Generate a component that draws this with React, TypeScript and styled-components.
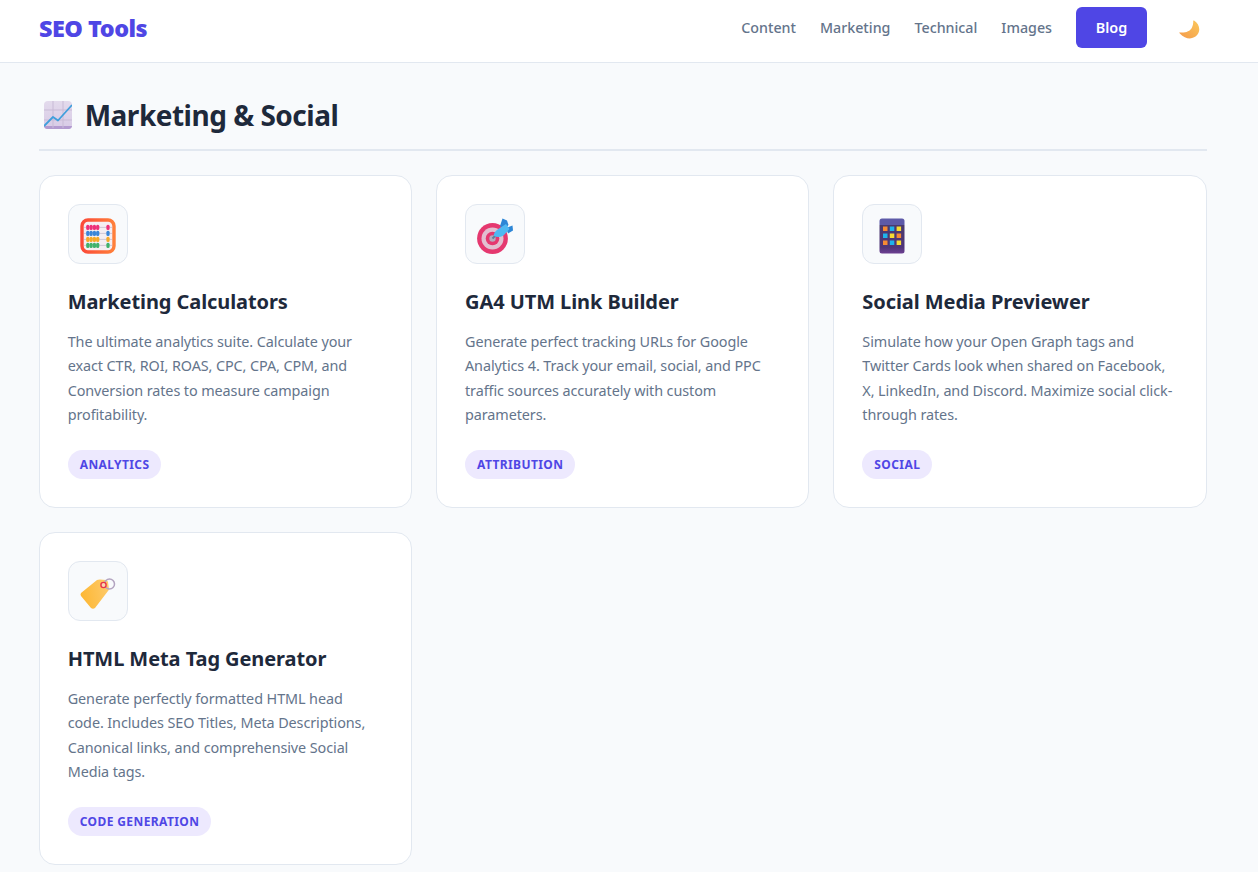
import React from "react";
import styled, { createGlobalStyle } from "styled-components";

const Global = createGlobalStyle`
  html, body { margin: 0; padding: 0; background: #f8fafc; }
  body { font-family: "Noto Sans", Inter, sans-serif; color: #1e293b; }
  * { box-sizing: border-box; }
`;

const Header = styled.header`
  height: 63px;
  background: #ffffff;
  border-bottom: 1px solid #e2e8f0;
  display: flex;
  align-items: center;
  justify-content: space-between;
  padding: 0 57px 7px 39px;
`;
const Logo = styled.a`
  font-size: 23.4px;
  font-weight: 900;
  letter-spacing: -0.5px;
  color: #4f46e5;
  line-height: 30px;
`;
const Nav = styled.nav`
  display: flex;
  align-items: center;
`;
const NavLink = styled.a`
  font-size: 14.25px;
  font-weight: 500;
  color: #64748b;
  margin-right: 24px;
`;
const BlogButton = styled.a`
  width: 71px;
  height: 41px;
  display: flex;
  align-items: center;
  justify-content: center;
  background: #4f46e5;
  color: #ffffff;
  border-radius: 6px;
  font-size: 14.4px;
  font-weight: 600;
`;
const ThemeToggle = styled.button`
  width: 21px;
  height: 20px;
  margin: 4px 1px 0 32px;
  padding: 0;
  border: 0;
  background: transparent;
  display: flex;
`;
const Main = styled.main`
  padding: 30px 51.3px 7px 38.7px;
`;
const Heading = styled.h2`
  margin: 0 0 24px;
  height: 58px;
  padding: 4px 0 16px 5px;
  border-bottom: 2px solid #e2e8f0;
  display: flex;
  align-items: center;
  gap: 13px;
  font-size: 28px;
  font-weight: 700;
  letter-spacing: -0.5px;
  line-height: 38px;
  color: #1e293b;
`;
const HeadingIcon = styled.span`
  width: 28px;
  height: 28px;
  display: flex;
  flex: none;
`;
const Grid = styled.div`
  display: grid;
  grid-template-columns: repeat(3, 1fr);
  gap: 24px;
`;
const Card = styled.article`
  height: 333px;
  background: #ffffff;
  border: 1px solid #e2e8f0;
  border-radius: 16px;
  padding: 28px;
  display: flex;
  flex-direction: column;
  align-items: flex-start;
`;
const IconBox = styled.div`
  width: 60px;
  height: 60px;
  padding-top: 3px;
  background: #f8fafc;
  border: 1px solid #e2e8f0;
  border-radius: 12px;
  display: flex;
  align-items: center;
  justify-content: center;
`;
const Title = styled.h3`
  margin: 24px 0 0;
  font-size: 20px;
  font-weight: 700;
  letter-spacing: -0.08px;
  line-height: 28px;
  color: #1e293b;
`;
const Desc = styled.p`
  margin: 13.6px 0 0;
  max-width: 312px;
  font-size: 14.4px;
  letter-spacing: -0.09px;
  line-height: 24.48px;
  color: #64748b;
`;
const Tag = styled.span`
  margin-top: auto;
  height: 29px;
  padding: 0 12px;
  display: flex;
  align-items: center;
  border-radius: 15px;
  background: #ede9fe;
  color: #4f46e5;
  font-size: 12px;
  font-weight: 700;
  letter-spacing: 0.4px;
  text-transform: uppercase;
`;

const ChartIcon = () => (
  <svg viewBox="0 0 28 28" width="28" height="28">
    <defs>
      <linearGradient id="cg" x1="0" y1="0" x2="0" y2="1">
        <stop offset="0" stopColor="#e3daec" />
        <stop offset="1" stopColor="#d8cbe6" />
      </linearGradient>
    </defs>
    <rect width="28" height="28" rx="4" fill="url(#cg)" />
    <path d="M0 25.5v-.5h28v.5a3 3 0 0 1-3 2.5H3a3 3 0 0 1-3-2.5z" fill="#b39bd0" />
    <path d="M9 0v27M19 0v27M0 9h28M0 19h28" stroke="#c8bbd6" strokeWidth="1" />
    <path d="M0 25 L9 16 L14 19.5 L28 4" fill="none" stroke="#3f9fdc" strokeWidth="1.8" strokeLinejoin="round" />
  </svg>
);

const AbacusIcon = () => (
  <svg viewBox="0 0 36 36" width="36" height="36">
    <defs>
      <linearGradient id="ab" x1="0" y1="0" x2="1" y2="0">
        <stop offset="0" stopColor="#fb4a38" />
        <stop offset="1" stopColor="#ff7f3a" />
      </linearGradient>
    </defs>
    <rect x="2" y="2" width="32" height="32" rx="6" fill="#f5eef2" stroke="url(#ab)" strokeWidth="3.4" />
    {[
      { y: 9.4, c: "#ee2f78" },
      { y: 15.4, c: "#3b86d8" },
      { y: 21.4, c: "#f7a928" },
      { y: 27.4, c: "#3fb26b" },
    ].map(({ y, c }) => (
      <g key={y}>
        <path d={`M4 ${y}h28`} stroke="#cfc6d6" strokeWidth="1" />
        {[7.8, 11.1, 14.4, 17.7, 28].map((x) => (
          <rect key={x} x={x - 1.6} y={y - 2.6} width="3.2" height="5.2" rx="1.5" fill={c} />
        ))}
      </g>
    ))}
  </svg>
);

const TargetIcon = () => (
  <svg viewBox="0 0 36 36" width="36" height="36">
    <circle cx="15.5" cy="20.5" r="15.4" fill="#e5386f" />
    <circle cx="15.5" cy="20.5" r="11" fill="#e2bfd0" />
    <circle cx="15.5" cy="20.5" r="6.8" fill="#e5386f" />
    <circle cx="15.5" cy="20.5" r="3.2" fill="#b9a9bd" />
    <path d="M15.5 20.5 L21 15" stroke="#5b7f9e" strokeWidth="2" />
    <path d="M23 8 L25.5 0.5 L30 2.5 L31.5 7 L27 12Z" fill="#2d86d6" />
    <path d="M29 10 L35.5 7.5 L36 12.5 L31 15.5Z" fill="#2d86d6" />
    <path d="M16.5 17.5 Q17.5 13 22 10.5 L29 6 L32.5 11 L26.5 17.5 Q21 20.5 16.5 17.5Z" fill="#4fb8f2" />
  </svg>
);

const PhoneIcon = () => (
  <svg viewBox="0 0 36 36" width="36" height="36">
    <defs>
      <linearGradient id="pg" x1="0" y1="0" x2="0" y2="1">
        <stop offset="0" stopColor="#5d5aa8" />
        <stop offset="0.18" stopColor="#5d5aa8" />
        <stop offset="0.19" stopColor="#4a3a6e" />
        <stop offset="0.82" stopColor="#4f3578" />
        <stop offset="1" stopColor="#6d3f92" />
      </linearGradient>
    </defs>
    <rect x="5.5" y="0.5" width="25" height="35" rx="2.5" fill="url(#pg)" />
    {[8.5, 15.5, 22.5].flatMap((y, r) =>
      [9, 15.8, 22.6].map((x, c) => (
        <rect
          key={`${r}${c}`}
          x={x}
          y={y}
          width="4.5"
          height="4.5"
          fill={[["#f68a33", "#1fb3ec", "#f7dc32"], ["#1fb3ec", "#f7dc32", "#f68a33"], ["#f68a33", "#1fb3ec", "#f7dc32"]][r][c]}
        />
      ))
    )}
  </svg>
);

const TagIcon = () => (
  <svg viewBox="0 0 36 36" width="36" height="36">
    <defs>
      <linearGradient id="tg" x1="0" y1="0.6" x2="1" y2="0.4">
        <stop offset="0" stopColor="#fdb733" />
        <stop offset="1" stopColor="#fdc968" />
      </linearGradient>
    </defs>
    <g transform="translate(0 3)">
      <path d="M1 15 L17 2 Q18 1.5 20 1.5 L26 2 Q27.5 2.5 28 4 L29 11 Q29 12 28 13 L15 30 Q13 31.5 11 30 L1 18 Q0 16.5 1 15Z" fill="url(#tg)" />
      <circle cx="29.5" cy="6" r="5" fill="none" stroke="#b3a4c0" strokeWidth="1.5" />
      <circle cx="23.5" cy="7" r="2.6" fill="#f7d9b0" stroke="#e8334a" strokeWidth="1.4" />
    </g>
  </svg>
);

const MoonIcon = () => (
  <svg viewBox="0 0 21 20" width="21" height="20">
    <defs>
      <linearGradient id="mg" x1="0" y1="1" x2="1" y2="0">
        <stop offset="0" stopColor="#f49a4a" />
        <stop offset="1" stopColor="#fbc85c" />
      </linearGradient>
    </defs>
    <path d="M15 0.6 C20 3.4 22 10 18.5 14.6 C14.5 19.8 7 20 0.8 13.4 C0.2 12.8 0.4 12.2 1.2 12.4 C6 13 11 11.4 13 7.4 C14 5.2 14.4 3 14.2 1.2 C14.1 0.6 14.5 0.3 15 0.6Z" fill="url(#mg)" />
  </svg>
);

const tools = [
  {
    icon: <AbacusIcon />,
    title: "Marketing Calculators",
    desc: "The ultimate analytics suite. Calculate your exact CTR, ROI, ROAS, CPC, CPA, CPM, and Conversion rates to measure campaign profitability.",
    tag: "Analytics",
  },
  {
    icon: <TargetIcon />,
    title: "GA4 UTM Link Builder",
    desc: "Generate perfect tracking URLs for Google Analytics 4. Track your email, social, and PPC traffic sources accurately with custom parameters.",
    tag: "Attribution",
  },
  {
    icon: <PhoneIcon />,
    title: "Social Media Previewer",
    desc: "Simulate how your Open Graph tags and Twitter Cards look when shared on Facebook, X, LinkedIn, and Discord. Maximize social click-through rates.",
    tag: "Social",
  },
  {
    icon: <TagIcon />,
    title: "HTML Meta Tag Generator",
    desc: "Generate perfectly formatted HTML head code. Includes SEO Titles, Meta Descriptions, Canonical links, and comprehensive Social Media tags.",
    tag: "Code Generation",
  },
];

export default function App() {
  return (
    <>
      <Global />
      <Header>
        <Logo>SEO Tools</Logo>
        <Nav>
          {["Content", "Marketing", "Technical", "Images"].map((n) => (
            <NavLink key={n}>{n}</NavLink>
          ))}
          <BlogButton>Blog</BlogButton>
          <ThemeToggle aria-label="Toggle theme">
            <MoonIcon />
          </ThemeToggle>
        </Nav>
      </Header>
      <Main>
        <Heading>
          <HeadingIcon>
            <ChartIcon />
          </HeadingIcon>
          Marketing &amp; Social
        </Heading>
        <Grid>
          {tools.map((t) => (
            <Card key={t.title}>
              <IconBox>{t.icon}</IconBox>
              <Title>{t.title}</Title>
              <Desc>{t.desc}</Desc>
              <Tag>{t.tag}</Tag>
            </Card>
          ))}
        </Grid>
      </Main>
    </>
  );
}
